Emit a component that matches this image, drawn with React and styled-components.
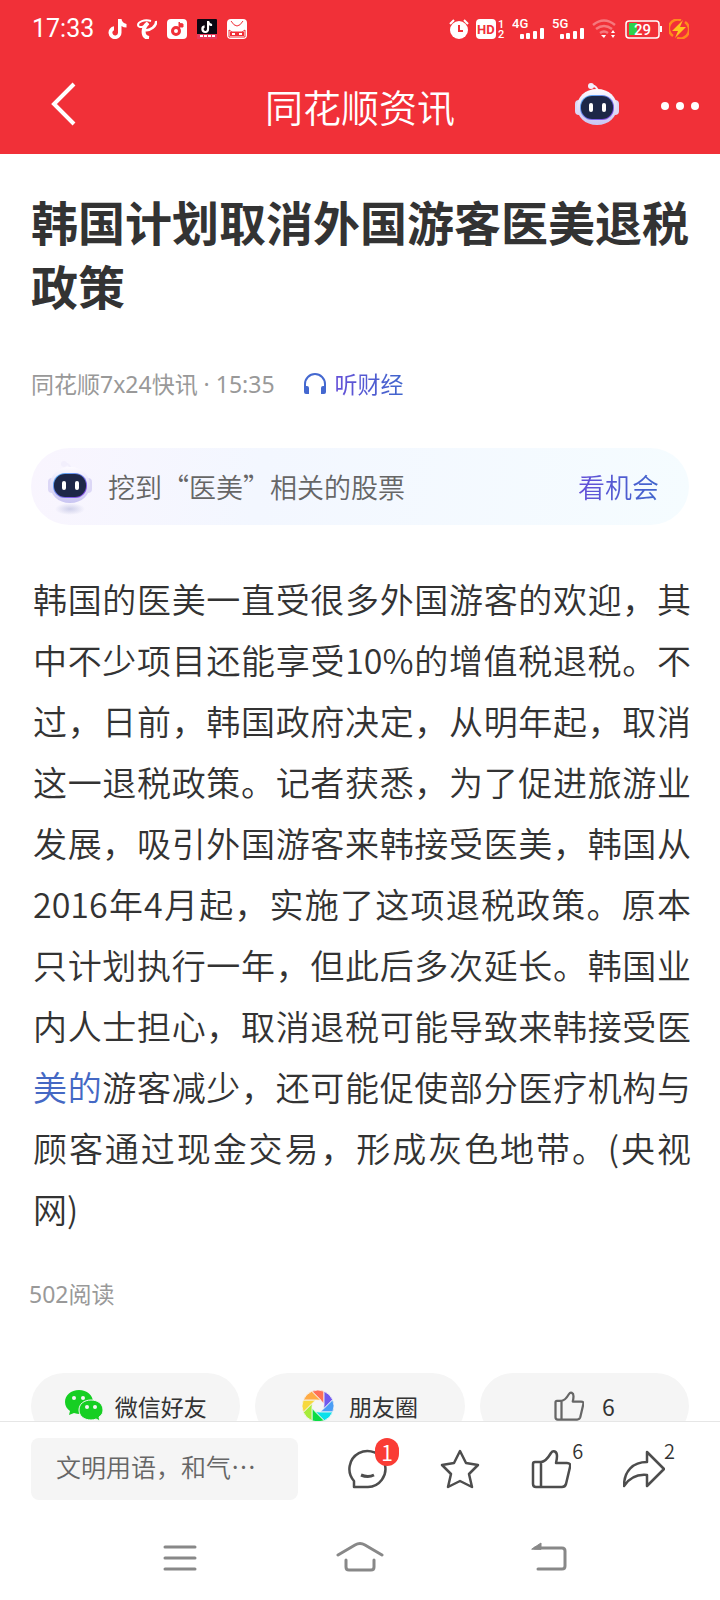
import React from 'react';
import styled, { createGlobalStyle } from 'styled-components';

const GlobalStyle = createGlobalStyle`
  * {
    box-sizing: border-box;
  }

  body {
    margin: 0;
    background: #fff;
    color: #333;
    font-family: 'Noto Sans CJK SC', sans-serif;
  }

  button {
    padding: 0;
    border: 0;
    background: none;
    color: inherit;
    font: inherit;
    cursor: pointer;
  }

  svg {
    display: block;
    flex: none;
  }
`;

const Page = styled.div`
  display: flex;
  flex-direction: column;
  height: 100vh;
`;

const Header = styled.header`
  background: #f13038;
  color: #fff;
`;

const StatusBar = styled.div`
  display: flex;
  justify-content: space-between;
  align-items: center;
  height: 58px;
  padding: 0 31px 0 32px;
`;

const StatusGroup = styled.div`
  display: flex;
  align-items: center;
  gap: ${({ $gap }) => $gap}px;
`;

const Clock = styled.time`
  margin-right: 4px;
  font-family: Roboto, sans-serif;
  font-size: 25px;
  line-height: 30px;
`;

const TitleBar = styled.div`
  display: grid;
  grid-template-columns: 1fr auto 1fr;
  align-items: center;
  height: 96px;
  padding: 0 20px;
`;

const BackButton = styled.button`
  justify-self: start;
  margin-left: 20px;
`;

const AppTitle = styled.div`
  font-size: 38px;
  font-weight: 350;
  line-height: 48px;
`;

const Actions = styled.div`
  display: flex;
  align-items: center;
  justify-content: flex-end;
  gap: 40px;
`;

const Main = styled.main`
  flex: 1;
  min-height: 0;
  overflow-y: auto;
  padding: 35px 31px 0;
  scrollbar-width: none;
`;

const Headline = styled.h1`
  margin: 0;
  font-size: 47px;
  font-weight: 700;
  line-height: 64px;
`;

const Meta = styled.div`
  display: flex;
  align-items: center;
  gap: 28px;
  margin-top: 51px;
  color: #999;
  font-family: 'Noto Sans', 'Noto Sans CJK SC', sans-serif;
  font-size: 23px;
  line-height: 32px;
`;

const Listen = styled.button`
  display: flex;
  align-items: center;
  gap: 8px;
`;

const GradientText = styled.span`
  background: linear-gradient(90deg, #6550d8, #3f66cc);
  background-clip: text;
  color: transparent;
`;

const StockPill = styled.a`
  display: flex;
  align-items: center;
  gap: 15px;
  height: 77px;
  margin-top: 48px;
  padding: 0 30px 0 16px;
  border-radius: 39px;
  background: linear-gradient(100deg, #f9f5fe, #f3f7ff 35%, #f5fcff);
  color: #666;
  font-size: 27px;
  font-weight: 350;
  text-decoration: none;

  ${GradientText} {
    margin-left: auto;
  }
`;

const Body = styled.p`
  margin: 43px -2px 0 0;
  padding-left: 2px;
  font-size: 34px;
  font-weight: 350;
  line-height: 61px;
  text-align: justify;
`;

const Keyword = styled.a`
  color: #4468c4;
  text-decoration: none;
`;

const ReadCount = styled.div`
  margin: 39px 0 0 -2px;
  color: #999;
  font-family: 'Noto Sans', 'Noto Sans CJK SC', sans-serif;
  font-size: 23px;
  line-height: 32px;
`;

const ShareRow = styled.div`
  display: grid;
  grid-template-columns: repeat(3, 1fr);
  gap: 15px;
  margin-top: 63px;
`;

const ShareButton = styled.button`
  display: flex;
  align-items: center;
  justify-content: center;
  gap: ${({ $gap }) => $gap || 12}px;
  height: 66px;
  border-radius: 33px;
  background: #f5f5f5;
  font-size: 23px;
  line-height: 24px;
`;

const Footer = styled.footer`
  border-top: 1px solid #e6e6e6;
  background: #fff;
`;

const CommentBar = styled.div`
  display: flex;
  align-items: center;
  padding: 16px 31px 0;
`;

const CommentInput = styled.input`
  flex: 0 1 267px;
  min-width: 0;
  height: 62px;
  padding: 0 25px 6px;
  border: 0;
  border-radius: 8px;
  background: #f5f5f5;
  font: 350 25px 'Noto Sans CJK SC', sans-serif;

  &::placeholder {
    color: #666;
    opacity: 1;
  }
`;

const Tools = styled.div`
  display: flex;
  flex: 1;
  justify-content: space-between;
  padding: 0 24px 0 50px;
`;

const Tool = styled.button`
  position: relative;
`;

const Count = styled.span`
  position: absolute;
  top: -10px;
  left: 41px;
  font-size: 20px;
  font-weight: 350;
  line-height: 24px;
`;

const Badge = styled.span`
  position: absolute;
  top: -11px;
  left: 27px;
  min-width: 24px;
  border-radius: 12px;
  background: #fa3c35;
  color: #fff;
  font-size: 21px;
  line-height: 28px;
  text-align: center;
`;

const NavBar = styled.nav`
  display: grid;
  grid-template-columns: repeat(3, 1fr);
  justify-items: center;
  padding: 38px 90px 22px;
`;

const Robot = ({ shadow }) => (
  <svg width="46" height="56" viewBox="0 0 46 56">
    <defs>
      <linearGradient id="shell" x1="0" y1="0" x2="0" y2="1">
        <stop offset="0" stopColor="#fdfbff" />
        <stop offset="1" stopColor="#c9c5f2" />
      </linearGradient>
      <linearGradient id="rim" x1="0" y1="0" x2="1" y2="1">
        <stop offset="0" stopColor="#59b8f5" />
        <stop offset="1" stopColor="#8a3fe0" />
      </linearGradient>
      <radialGradient id="shade">
        <stop offset="0" stopColor="#cfd0ea" />
        <stop offset="1" stopColor="#cfd0ea" stopOpacity="0" />
      </radialGradient>
    </defs>
    {shadow && <ellipse cx="23" cy="50" rx="15" ry="6" fill="url(#shade)" />}
    <g transform={shadow ? 'translate(0 -1)' : 'translate(0 2)'}>
      <path d="M17 6q6-1 7 6" fill="none" stroke="#f2effc" strokeWidth="2" />
      <circle cx="17" cy="6" r="3" fill="#f2effc" />
      <rect x="1" y="20" width="8" height="15" rx="4" fill="#dcd7f6" />
      <rect x="37" y="20" width="8" height="15" rx="4" fill="#dcd7f6" />
      <path d="M23 9c12 0 20 8 20 18s-8 18-20 18S3 37 3 27 11 9 23 9z" fill="url(#shell)" />
      <rect x="6" y="15" width="34" height="25" rx="12" fill="url(#rim)" />
      <rect x="7" y="16" width="32" height="23" rx="11" fill="#1d2748" />
      <rect x="15" y="23" width="4" height="9" rx="2" fill="#fff" />
      <rect x="28" y="23" width="4" height="9" rx="2" fill="#fff" />
    </g>
  </svg>
);

const NOTE = 'M10 0h3.500q.5 4 5 5v3.500q-3 0-5-1.500v6.500a6.500 6.500 0 1 1-7.500-6.300v4a2.800 2.800 0 1 0 4 2.300z';

const ThumbIcon = ({ size, color, width }) => (
  <svg width={size} height={size} viewBox="0 0 40 40" fill="none" stroke={color} strokeWidth={width} strokeLinejoin="round">
    <path d="M10 13H4q-2 0-2 2v20q0 3 3 3h26q3 0 4-3l4-17q1-4-3-4H25q1-4 1-7c0-5-4-6-6-3-3 5-6 9-10 9zM10 13v25" />
  </svg>
);

const Signal = ({ label }) => (
  <svg width="33" height="24" viewBox="0 0 33 24" fill="#fff">
    <text x="0" y="11" fontSize="13" fontWeight="500" fontFamily="Roboto, sans-serif">{label}</text>
    <rect x="8" y="17" width="4" height="5" rx="1" />
    <rect x="14" y="16" width="4" height="6" rx="1" />
    <rect x="21" y="14" width="4" height="8" rx="1" />
    <rect x="28" y="11" width="4" height="11" rx="1" />
  </svg>
);

const PETALS = ['#ff7057', '#7159ee', '#4a9df5', '#0be0ea', '#0bdc45', '#a7ec3a', '#f6d83e', '#ffab45'];

const Aperture = () => (
  <svg width="32" height="32" viewBox="-16 -16 32 32">
    {PETALS.map((color, i) => (
      <path
        key={color}
        d="M-6.200-14.700A16 16 0 0 1 6-14.800L6-2 2.800-5.700Z"
        fill={color}
        stroke="#f5f5f5"
        strokeWidth="0.800"
        transform={`rotate(${i * 45})`}
      />
    ))}
  </svg>
);

const App = () => (
  <Page lang="zh-CN">
    <GlobalStyle />
    <Header>
      <StatusBar>
        <StatusGroup $gap={10}>
          <Clock>17:33</Clock>
          <svg width="19" height="20" viewBox="0 0 19 20" fill="#fff">
            <path d={NOTE} />
          </svg>
          <svg width="20" height="20" viewBox="0 0 20 20" fill="none" stroke="#fff">
            <path d="M14 2C7 0 1 3 1 6c0 3 7 3 10-2" strokeWidth="2" />
            <path d="M11 4C6 8 4 18 12 19" strokeWidth="4" />
            <path d="M8 11c5 1 12-4 11-9" strokeWidth="2.500" />
          </svg>
          <svg width="20" height="20" viewBox="0 0 20 20">
            <rect width="20" height="20" rx="4" fill="#fff" />
            <circle cx="9" cy="12" r="3.500" fill="none" stroke="#f13038" strokeWidth="3" />
            <path d="M12 11V3q1 2 4 2v3h-3" fill="#f13038" stroke="#f13038" />
          </svg>
          <svg width="20" height="20" viewBox="0 0 20 20">
            <rect width="20" height="20" rx="1" fill="#0b0712" />
            <path d={NOTE} fill="#fff" transform="translate(4 2) scale(.6)" />
            <path d="M0 15h20v5H0z" fill="#e8395c" />
            <path d="M3 17h15" stroke="#fff" strokeWidth="2" strokeDasharray="3 1" />
          </svg>
          <svg width="20" height="20" viewBox="0 0 20 20">
            <rect width="20" height="20" rx="4" fill="#fff" />
            <path d="M4 2q6 10 12 0M2 11l3 2h10l3-2v7H2z" fill="none" stroke="#f13038" />
            <path d="M3 13h14v4H3z" fill="#f13038" />
            <path d="M5 15h3m4 0h3" stroke="#fff" strokeWidth="2" />
          </svg>
        </StatusGroup>
        <StatusGroup $gap={7}>
          <svg width="20" height="20" viewBox="0 0 20 20">
            <circle cx="10" cy="11" r="9" fill="#fff" />
            <path d="M1 5l4-4M19 5l-4-4" stroke="#fff" strokeWidth="2" />
            <path d="M10 6v6h4" fill="none" stroke="#f13038" strokeWidth="2" />
          </svg>
          <svg width="29" height="24" viewBox="0 0 29 24" fill="#fff">
            <rect y="2" width="20" height="20" rx="4" />
            <text x="1" y="17" fontSize="13" fontWeight="700" fontFamily="Roboto" fill="#f13038">HD</text>
            <text x="22" y="11" fontSize="11" fontWeight="500" fontFamily="Roboto">1</text>
            <text x="22" y="21" fontSize="11" fontWeight="500" fontFamily="Roboto">2</text>
          </svg>
          <Signal label="4G" />
          <Signal label="5G" />
          <svg width="26" height="20" viewBox="0 0 26 20" fill="none">
            <path d="M1 6q11-9 22 0M4 10q8-6 16 0M8 14q4-3 8 0" stroke="#fff" strokeOpacity=".35" strokeWidth="2.500" />
            <path d="M9 16h5l-2 3zM19 14l2-3 2 3zM19 16l2 3 2-3z" fill="#fff" />
          </svg>
          <svg width="37" height="20" viewBox="0 0 37 20">
            <rect x="1" y="2" width="33" height="17" rx="3" fill="none" stroke="#fff" strokeWidth="1.500" />
            <path d="M4 4h8v12H4z" fill="#2bd34b" />
            <path d="M36 7v6" stroke="#fff" strokeWidth="2" />
            <text x="9" y="16" fontSize="15" fontWeight="500" fontFamily="Roboto" fill="#fff">29</text>
          </svg>
          <svg width="20" height="20" viewBox="0 0 20 20">
            <path d="M12 1A9 9 0 0 0 4 17M8 19a9 9 0 0 0 8-16" fill="none" stroke="#ff8a1c" strokeWidth="2.500" />
            <path d="M14 1L3 12h6l-3 7L17 8h-6z" fill="#ffc51c" />
          </svg>
        </StatusGroup>
      </StatusBar>
      <TitleBar>
        <BackButton type="button" aria-label="返回">
          <svg width="48" height="48" viewBox="0 0 48 48" fill="none" stroke="#fff" strokeWidth="4">
            <path d="M34 2L14 22l20 20" />
          </svg>
        </BackButton>
        <AppTitle>同花顺资讯</AppTitle>
        <Actions>
          <button type="button" aria-label="智能助手">
            <Robot />
          </button>
          <button type="button" aria-label="更多">
            <svg width="40" height="10" viewBox="0 0 40 10" fill="#fff">
              <circle cx="5" cy="5" r="4" />
              <circle cx="20" cy="5" r="4" />
              <circle cx="35" cy="5" r="4" />
            </svg>
          </button>
        </Actions>
      </TitleBar>
    </Header>

    <Main>
      <Headline>韩国计划取消外国游客医美退税政策</Headline>
      <Meta>
        <span>同花顺7x24快讯 · 15:35</span>
        <Listen type="button">
          <svg width="24" height="24" viewBox="0 0 24 24">
            <path d="M2 20V12a10 10 0 0 1 20 0v8" fill="none" stroke="#4468d0" strokeWidth="2" />
            <path d="M1 14h3q2 0 2 2v6H3q-2 0-2-2zM23 14h-3q-2 0-2 2v6h3q2 0 2-2z" fill="#4468d0" />
          </svg>
          <GradientText>听财经</GradientText>
        </Listen>
      </Meta>
      <StockPill href="#stocks">
        <Robot shadow />
        <span>挖到“医美”相关的股票</span>
        <GradientText>看机会</GradientText>
      </StockPill>
      <Body>
        韩国的医美一直受很多外国游客的欢迎，其中不少项目还能享受10%的增值税退税。不过，日前，韩国政府决定，从明年起，取消这一退税政策。记者获悉，为了促进旅游业发展，吸引外国游客来韩接受医美，韩国从2016年4月起，实施了这项退税政策。原本只计划执行一年，但此后多次延长。韩国业内人士担心，取消退税可能导致来韩接受医<Keyword href="#keyword">美的</Keyword>游客减少，还可能促使部分医疗机构与顾客通过现金交易，形成灰色地带。(央视网)
      </Body>
      <ReadCount>502阅读</ReadCount>
      <ShareRow>
        <ShareButton type="button">
          <svg width="38" height="32" viewBox="0 0 38 32">
            <path d="M14 0C6 0 0 5 0 12c0 4 2 7 5 9l-1 4 5-2q3 1 6 1c8 0 13-5 13-12S22 0 14 0z" fill="#16cf23" />
            <path d="M26 10c-7 0-12 4-12 10s5 10 12 10q3 0 5-1l4 2-1-4c3-2 4-4 4-7 0-6-5-10-12-10z" fill="#16cf23" stroke="#f5f5f5" />
            <g fill="#f5f5f5">
              <circle cx="9" cy="8" r="2" />
              <circle cx="18" cy="8" r="2" />
              <circle cx="22" cy="17" r="2" />
              <circle cx="30" cy="17" r="2" />
            </g>
          </svg>
          微信好友
        </ShareButton>
        <ShareButton type="button" $gap={15}>
          <Aperture />
          朋友圈
        </ShareButton>
        <ShareButton type="button" $gap={18}>
          <ThumbIcon size={30} color="#666" width={3} />
          6
        </ShareButton>
      </ShareRow>
    </Main>

    <Footer>
      <CommentBar>
        <CommentInput aria-label="评论" placeholder="文明用语，和气…" />
        <Tools>
          <Tool type="button" aria-label="评论列表">
            <svg width="40" height="40" viewBox="0 0 40 40" fill="none" stroke="#4d4d4d" strokeWidth="2.500" strokeLinejoin="round">
              <path d="M20 38H6v-6A18 18 0 1 1 20 38z" />
              <path d="M13 26q7 3 13 0" strokeWidth="3" />
            </svg>
            <Badge>1</Badge>
          </Tool>
          <Tool type="button" aria-label="收藏">
            <svg width="40" height="40" viewBox="0 0 40 40" fill="none" stroke="#4d4d4d" strokeWidth="2.500" strokeLinejoin="round">
              <path d="M20 2l6 12 12 2-9 9 3 13-12-6-12 6 3-13-9-9 12-2z" />
            </svg>
          </Tool>
          <Tool type="button" aria-label="点赞">
            <ThumbIcon size={40} color="#4d4d4d" width={2.5} />
            <Count>6</Count>
          </Tool>
          <Tool type="button" aria-label="分享">
            <svg width="42" height="40" viewBox="0 0 42 40" fill="none" stroke="#4d4d4d" strokeWidth="2.500" strokeLinejoin="round">
              <path d="M24 3l17 17-17 17V26C14 25 7 28 1 37 1 22 10 13 24 13z" />
            </svg>
            <Count>2</Count>
          </Tool>
        </Tools>
      </CommentBar>
      <NavBar>
        <button type="button" aria-label="菜单">
          <svg width="34" height="40" viewBox="0 0 34 40" stroke="#888" strokeWidth="3" strokeLinecap="round">
            <path d="M2 9h30M2 20h30M2 31h30" />
          </svg>
        </button>
        <button type="button" aria-label="主页">
          <svg width="48" height="40" viewBox="0 0 48 40" fill="none" stroke="#888" strokeWidth="3" strokeLinecap="round">
            <path d="M2 17L19 7q5-3 10 0l17 10M10 22v7q0 3 3 3h22q3 0 3-3v-7" />
          </svg>
        </button>
        <button type="button" aria-label="后退">
          <svg width="54" height="40" viewBox="0 0 54 40" fill="none" stroke="#888" strokeWidth="3" strokeLinecap="round">
            <path d="M22 10h27q3 0 3 3v15q0 3-3 3H25" />
            <path d="M19 11l9-6v6z" fill="#888" strokeWidth="1" />
          </svg>
        </button>
      </NavBar>
    </Footer>
  </Page>
);

export default App;
